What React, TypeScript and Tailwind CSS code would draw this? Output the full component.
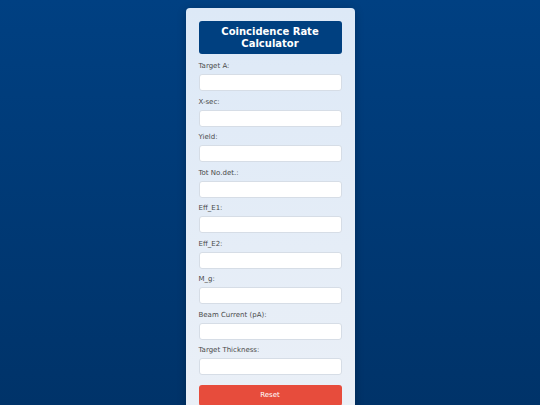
import React, { useState } from "react";

const fields = [
  "Target A:",
  "X-sec:",
  "Yield:",
  "Tot No.det.:",
  "Eff_E1:",
  "Eff_E2:",
  "M_g:",
  "Beam Current (pA):",
  "Target Thickness:",
];

export default function App() {
  const [values, setValues] = useState<string[]>(fields.map(() => ""));

  return (
    <div className="h-[405px] overflow-hidden bg-gradient-to-b from-[#004082] to-[#003369] font-['DejaVu_Sans',sans-serif]">
      <div className="mx-auto mt-[8px] w-[169px] rounded-[4px] bg-gradient-to-b from-[#dde9f7] to-[#ebf0f7] px-[13px] pt-[13px] pb-[20px] shadow-[0_2px_8px_rgba(0,0,0,0.25)]">
        <h1 className="rounded-[3px] bg-[#004080] py-[4.5px] text-center text-[10px] leading-[12px] font-bold text-white">
          Coincidence Rate
          <br />
          Calculator
        </h1>

        <div className="mt-[8px]">
          {fields.map((label, i) => (
            <div key={label} className="mb-[6.5px]">
              <label className="mb-[3px] block text-[7px] leading-[9px] text-[#4a4a4a]">{label}</label>
              <input
                type="text"
                value={values[i]}
                onChange={(e) => {
                  const next = [...values];
                  next[i] = e.target.value;
                  setValues(next);
                }}
                className="block h-[17px] w-full rounded-[3px] border border-[#d6dde6] bg-white px-[4px] text-[7px] outline-none"
              />
            </div>
          ))}
        </div>

        <button
          onClick={() => setValues(fields.map(() => ""))}
          className="mt-[9.5px] block h-[21px] w-full rounded-[3px] bg-[#e74c3c] text-[7px] text-white"
        >
          Reset
        </button>
      </div>
    </div>
  );
}
